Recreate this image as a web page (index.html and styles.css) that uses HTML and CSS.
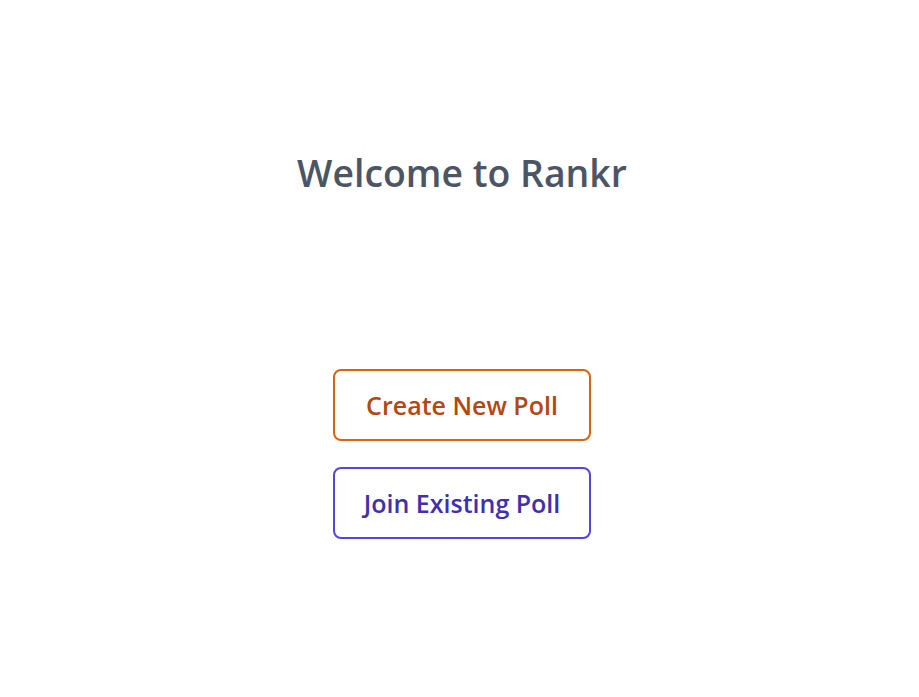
FILE: index.html
```html
<!DOCTYPE html>
<html lang="en">
<head>
<meta charset="utf-8">
<title>Rankr</title>
<link rel="stylesheet" href="styles.css">
</head>
<body>
<main class="page">
  <h1 class="title">Welcome to Rankr</h1>
  <div class="actions">
    <button class="btn btn-orange">Create New Poll</button>
    <button class="btn btn-indigo">Join Existing Poll</button>
  </div>
</main>
</body>
</html>
```
FILE: styles.css
```css
* { box-sizing: border-box; }
html, body { margin: 0; padding: 0; background: #ffffff; }
body {
  font-family: "Open Sans", "Noto Sans", sans-serif;
  width: 919px;
  height: 697px;
  overflow: hidden;
}
.page {
  display: flex;
  flex-direction: column;
  align-items: center;
  padding-top: 150px;
  padding-left: 5px;
}
.title {
  margin: 0;
  font-size: 37.4px;
  line-height: 45px;
  font-weight: 600;
  color: #4b5563;
}
.actions {
  display: flex;
  flex-direction: column;
  align-items: center;
  gap: 26px;
  margin-top: 174px;
}
.btn {
  width: 258px;
  height: 72px;
  border-radius: 8px;
  border: 2px solid;
  background: #ffffff;
  font-family: inherit;
  font-size: 25px;
  font-weight: 600;
  padding: 0;
  display: flex;
  align-items: center;
  justify-content: center;
}
.btn-orange { border-color: #d9630f; color: #b4470e; }
.btn-indigo { border-color: #5543e6; color: #4030ad; }
```
